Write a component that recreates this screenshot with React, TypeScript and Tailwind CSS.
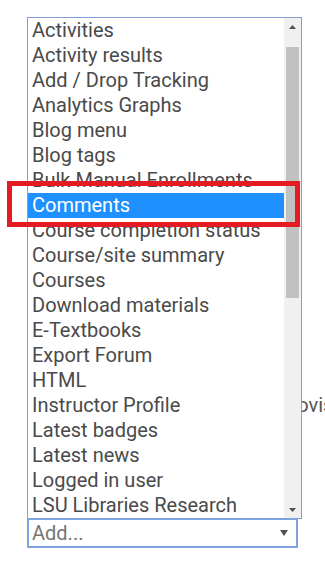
import React from "react";

const items = [
  "Activities",
  "Activity results",
  "Add / Drop Tracking",
  "Analytics Graphs",
  "Blog menu",
  "Blog tags",
  "Bulk Manual Enrollments",
  "Comments",
  "Course completion status",
  "Course/site summary",
  "Courses",
  "Download materials",
  "E-Textbooks",
  "Export Forum",
  "HTML",
  "Instructor Profile",
  "Latest badges",
  "Latest news",
  "Logged in user",
  "LSU Libraries Research",
];

export default function App() {
  return (
    <div
      className="relative w-[325px] h-[567px] bg-white overflow-hidden"
      style={{ fontFamily: "Roboto, 'Liberation Sans', sans-serif" }}
    >
      <span className="absolute left-[278px] top-[393px] text-[20px] leading-[25px] text-[#555]">
        Provis
      </span>
      <div className="pt-[17px] pl-[27px]">
        <div className="relative z-10 flex w-[275px] h-[502px] border border-[#7f9fd6] bg-white">
          <div className="flex-1 overflow-hidden">
            {items.map((it) => (
              <div
                key={it}
                className={
                  "h-[25px] pl-[4px] text-[20px] leading-[25px] whitespace-nowrap " +
                  (it === "Comments"
                    ? "bg-[#1e90ff] text-white"
                    : "text-[#4a4a4a]")
                }
              >
                {it}
              </div>
            ))}
          </div>
          <div className="flex w-[17px] flex-col bg-[#f0f0f0]">
            <div className="flex h-[17px] items-center justify-center">
              <svg width="7" height="4" viewBox="0 0 7 4">
                <path d="M0 4 L3.5 0 L7 4 Z" fill="#505050" />
              </svg>
            </div>
            <div className="mx-[2px] mt-[12px] h-[251px] bg-[#c1c1c1]" />
            <div className="flex-1" />
            <div className="flex h-[17px] items-center justify-center">
              <svg width="7" height="4" viewBox="0 0 7 4">
                <path d="M0 0 L3.5 4 L7 0 Z" fill="#505050" />
              </svg>
            </div>
          </div>
        </div>
        <div className="relative z-10 -mt-[1px] flex h-[30px] w-[271px] items-center justify-between border-2 border-[#7fa3dc] pl-[3px] pr-[8px]">
          <span className="text-[20px] leading-[24px] text-[#757575]">Add...</span>
          <svg width="8" height="6" viewBox="0 0 8 6">
            <path d="M0 0 L4 6 L8 0 Z" fill="#505050" />
          </svg>
        </div>
      </div>
      <div className="absolute left-[7px] top-[181px] z-20 h-[46px] w-[293px] border-[5px] border-[#e41b23]" />
    </div>
  );
}
